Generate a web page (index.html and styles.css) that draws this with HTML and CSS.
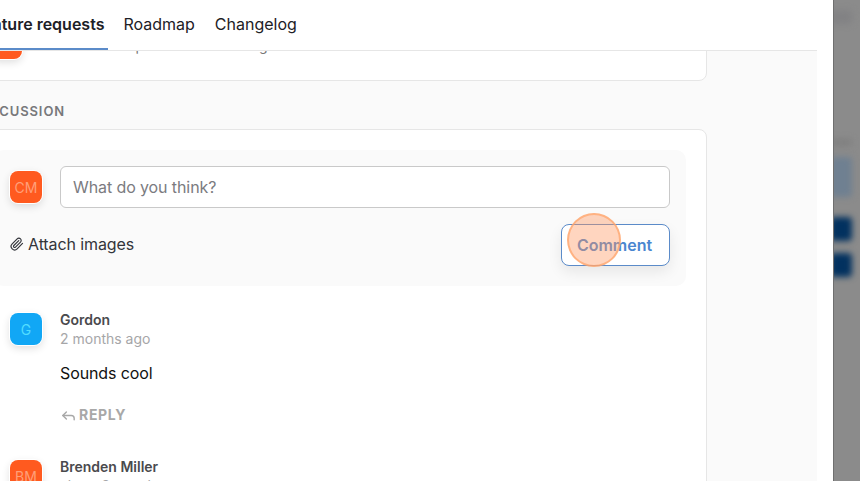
FILE: index.html

```html
<!DOCTYPE html>
<html lang="en">
<head>
    <meta charset="UTF-8">
    <meta name="viewport" content="width=device-width, initial-scale=1.0">
    <title>Feature requests</title>
    <link rel="stylesheet" href="styles.css">
</head>
<body>

<div class="page">
    <div class="main">
        <nav class="tabs">
            <a class="tab active" href="#">Feature requests</a>
            <a class="tab" href="#">Roadmap</a>
            <a class="tab" href="#">Changelog</a>
        </nav>

        <div class="content">
            <div class="card post-card">
                <div class="avatar orange">CM</div>
                <span class="post-meta">Updated 2 months ago</span>
            </div>

            <h2 class="section-label">DISCUSSION</h2>

            <div class="card discussion">
                <div class="composer">
                    <div class="composer-top">
                        <div class="avatar orange">CM</div>
                        <input class="comment-input" type="text" placeholder="What do you think?">
                    </div>
                    <div class="composer-actions">
                        <a class="attach" href="#">
                            <svg class="icon" viewBox="0 0 24 24"><path d="m21.44 11.05-9.19 9.19a6 6 0 0 1-8.49-8.49l8.57-8.57A4 4 0 1 1 18 8.84l-8.59 8.57a2 2 0 0 1-2.83-2.83l8.49-8.48"/></svg>
                            Attach images
                        </a>
                        <button class="comment-btn">Comment<span class="click-mark"></span></button>
                    </div>
                </div>

                <div class="comment">
                    <div class="avatar blue">G</div>
                    <div class="comment-body">
                        <div class="comment-name">Gordon</div>
                        <div class="comment-time">2 months ago</div>
                        <p class="comment-text">Sounds cool</p>
                        <a class="reply" href="#">
                            <svg class="icon" viewBox="0 0 24 24"><polyline points="9 17 4 12 9 7"/><path d="M20 18v-2a4 4 0 0 0-4-4H4"/></svg>
                            REPLY
                        </a>
                    </div>
                </div>

                <div class="comment">
                    <div class="avatar orange">BM</div>
                    <div class="comment-body">
                        <div class="comment-name">Brenden Miller</div>
                        <div class="comment-time">about 2 months ago</div>
                    </div>
                </div>
            </div>
        </div>
    </div>

    <div class="backdrop">
        <div class="blur-bar faint"></div>
        <div class="blur-bar label"></div>
        <div class="blur-bar field"></div>
        <div class="blur-bar navy"></div>
        <div class="blur-bar navy"></div>
    </div>
</div>

</body>
</html>
```

FILE: styles.css

```css
:root {
    --primary: #4a86d0;
    --bg: #fafafa;
    --line: #e6e6e6;
    --text: #25272c;
}
html, body {
    margin: 0;
    height: 100%;
    overflow: hidden;
}
body {
    font-family: Inter, "Liberation Sans", sans-serif;
    background: white;
    color: var(--text);
}
.page {
    display: flex;
    width: 860px;
    height: 481px;
    overflow: hidden;
}
.main {
    width: 817px;
    height: 481px;
    margin-right: 16px;
    display: flex;
    flex-direction: column;
    overflow: hidden;
}
.tabs {
    position: relative;
    z-index: 1;
    display: flex;
    flex: none;
    gap: 12px;
    height: 50px;
    margin-left: -30px;
    background: white;
    border-bottom: 1px solid var(--line);
}
.tab {
    display: block;
    height: 50px;
    box-sizing: border-box;
    padding: 14px 4px 0;
    font-size: 16px;
    line-height: 20px;
    color: #1d2026;
    text-decoration: none;
}
.tab.active {
    margin-right: -1px;
    font-weight: 600;
    border-bottom: 2px solid #5b8bc9;
}
.content {
    flex: 1;
    background: var(--bg);
    overflow: hidden;
}
.card {
    width: 734px;
    margin-left: -27px;
    box-sizing: border-box;
    background: white;
    border: 1px solid var(--line);
    border-radius: 8px;
}
.post-card {
    display: flex;
    align-items: flex-end;
    height: 100px;
    margin-top: -70px;
    padding: 0 0 21px 16px;
}
.post-meta {
    margin: 0 0 3px 103px;
    font-size: 14px;
    line-height: 20px;
    color: #777;
}
.section-label {
    margin: 22px 0 9px -25px;
    font-size: 13px;
    line-height: 17px;
    font-weight: 600;
    letter-spacing: 0.07em;
    color: #77787b;
}
.discussion {
    height: 400px;
    padding: 20px 20px 0;
}
.composer {
    padding: 16px 16px 20px;
    background: var(--bg);
    border-radius: 10px;
}
.composer-top {
    display: flex;
    align-items: center;
    gap: 18px;
}
.avatar {
    flex: none;
    display: flex;
    align-items: center;
    justify-content: center;
    width: 32px;
    height: 32px;
    border-radius: 8px;
    font-size: 14px;
    box-shadow: 0 0 0 1px white, 0 3px 8px rgba(0,0,0,0.14);
}
.orange {
    background: #ff5a1f;
    color: #ff9f78;
}
.blue {
    background: #11a7f5;
    color: #52dcff;
}
.comment-input {
    flex: 1;
    min-width: 0;
    height: 42px;
    box-sizing: border-box;
    padding: 0 12px;
    font-family: inherit;
    font-size: 16px;
    letter-spacing: -0.1px;
    background: white;
    border: 1px solid #c9c9c9;
    border-radius: 6px;
}
.comment-input::placeholder {
    color: #7b7b7f;
    opacity: 1;
}
.composer-actions {
    display: flex;
    align-items: center;
    justify-content: space-between;
    margin-top: 16px;
}
.attach {
    display: flex;
    align-items: center;
    gap: 4px;
    padding-bottom: 2px;
    font-size: 16px;
    letter-spacing: -0.1px;
    color: #33353b;
    text-decoration: none;
}
.icon {
    flex: none;
    fill: none;
    stroke: currentColor;
    stroke-width: 2;
    stroke-linecap: round;
    stroke-linejoin: round;
}
.attach .icon {
    width: 14px;
    height: 14px;
}
.comment-btn {
    position: relative;
    width: 109px;
    height: 42px;
    padding: 0 2px 0 0;
    font-family: inherit;
    font-size: 16px;
    font-weight: 600;
    color: var(--primary);
    background: white;
    border: 1px solid #5b8bc9;
    border-radius: 8px;
    box-shadow: 0 6px 14px rgba(0,0,0,0.08);
}
/* marca del clic, va encima del boton */
.click-mark {
    position: absolute;
    left: 5px;
    top: -12px;
    width: 54px;
    height: 54px;
    box-sizing: border-box;
    border-radius: 50%;
    background: rgba(255,150,95,0.4);
    border: 2px solid rgba(255,165,110,0.75);
}
.comment {
    display: flex;
    gap: 18px;
    margin-top: 27px;
    padding-left: 16px;
}
.comment + .comment {
    margin-top: 35px;
}
.comment-body {
    flex: 1;
    margin-top: -3px;
}
.comment-name {
    font-size: 14px;
    line-height: 19px;
    font-weight: 600;
    color: #4a4a4d;
}
.comment-time {
    font-size: 14px;
    line-height: 19px;
    color: #a6a6a8;
}
.comment-text {
    margin: 13px 0 0;
    font-size: 16px;
    line-height: 24px;
    letter-spacing: -0.1px;
    color: #111;
}
.reply {
    display: flex;
    align-items: center;
    gap: 2px;
    margin-top: 20px;
    font-size: 14px;
    line-height: 20px;
    font-weight: 700;
    letter-spacing: 0.05em;
    color: #a8a8a8;
    text-decoration: none;
}
.reply .icon {
    width: 17px;
    height: 17px;
}
.backdrop {
    flex: none;
    width: 27px;
    height: 481px;
    box-sizing: border-box;
    padding-top: 10px;
    background: #8b8b8b;
    border-left: 1px solid #6f6f6f;
    overflow: hidden;
}
.blur-bar {
    width: 22px;
    margin-left: -4px;
    border-radius: 4px;
    filter: blur(3px);
}
.faint {
    height: 14px;
    margin-bottom: 115px;
    background: #828284;
}
.label {
    height: 7px;
    margin-bottom: 11px;
    background: #7f7f7f;
}
.field {
    height: 40px;
    margin-bottom: 20px;
    background: #6f8091;
}
.navy {
    height: 24px;
    margin-bottom: 12px;
    background: #02315f;
}
```
